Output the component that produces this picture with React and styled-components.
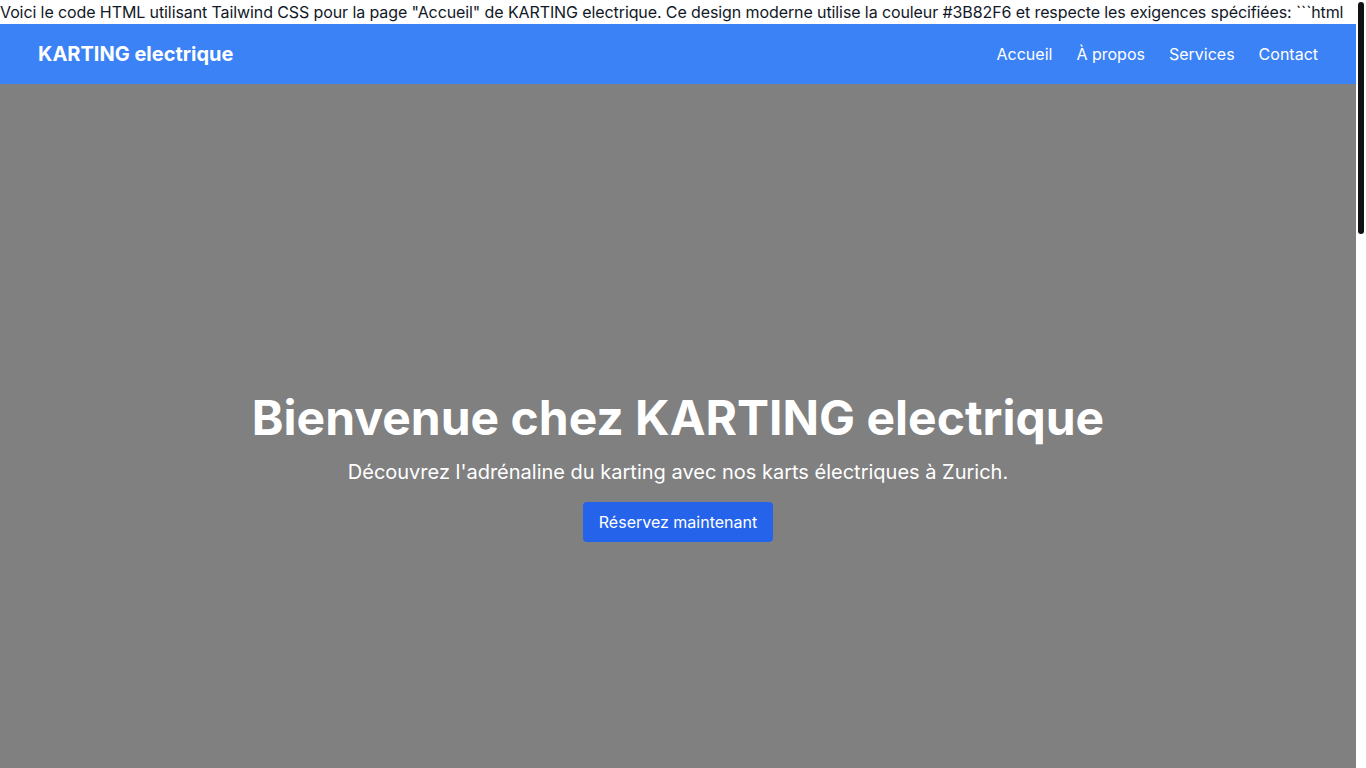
import React from "react";
import styled, { createGlobalStyle } from "styled-components";

const GlobalStyle = createGlobalStyle`
  *, *::before, *::after {
    box-sizing: border-box;
  }

  html, body {
    margin: 0;
    padding: 0;
  }

  body {
    font-family: Inter, "Noto Sans", "Liberation Sans", sans-serif;
    font-size: 16px;
    line-height: 24px;
    color: #111827;
    background: #ffffff;
  }
`;

// the page keeps a 10px gutter on the right, like the reference's scrollbar track
const Page = styled.div`
  margin-right: 10px;
`;

const ScrollThumb = styled.div`
  position: fixed;
  top: 2px;
  right: 2px;
  width: 6px;
  height: 232px;
  border-radius: 3px;
  background: #111111;
`;

const Intro = styled.p`
  margin: 0;
  white-space: nowrap;
  letter-spacing: -0.1px;
  overflow: hidden;
`;

const Header = styled.header`
  background-color: #3b82f6;
  color: #ffffff;
`;

const Container = styled.div`
  max-width: 1280px;
  margin: 0 auto;
  display: flex;
  align-items: center;
  justify-content: space-between;
  padding: 16px 0;
`;

const Logo = styled.a`
  font-size: 20px;
  line-height: 28px;
  font-weight: 700;
  color: #ffffff;
  text-decoration: none;
`;

const Nav = styled.nav`
  display: flex;
  gap: 24px;
`;

const NavLink = styled.a`
  color: #ffffff;
  text-decoration: none;
  font-size: 16px;
  line-height: 24px;

  &:hover {
    text-decoration: underline;
  }
`;

const Hero = styled.section`
  height: 100vh;
  background-color: #808080;
  display: flex;
  flex-direction: column;
  align-items: center;
  justify-content: center;
  text-align: center;
  color: #ffffff;
`;

const Title = styled.h1`
  margin: 0 0 16px;
  font-size: 48px;
  line-height: 48px;
  font-weight: 700;
`;

const Subtitle = styled.p`
  margin: 0 0 16px;
  font-size: 20px;
  line-height: 28px;
`;

const Button = styled.a`
  display: inline-block;
  background-color: #2563eb;
  color: #ffffff;
  padding: 8px 16px;
  border-radius: 4px;
  font-size: 16px;
  line-height: 24px;
  text-decoration: none;
  cursor: pointer;

  &:hover {
    background-color: #1d4ed8;
  }
`;

const Below = styled.main`
  min-height: 1650px;
  background: #ffffff;
`;

const App = () => {
  return (
    <>
      <GlobalStyle />
      <Page>
        <Intro>
          Voici le code HTML utilisant Tailwind CSS pour la page "Accueil" de KARTING electrique. Ce design moderne utilise la couleur #3B82F6 et respecte les exigences spécifiées: ```html
        </Intro>
        <Header>
          <Container>
            <Logo href="#">KARTING electrique</Logo>
            <Nav>
              <NavLink href="#">Accueil</NavLink>
              <NavLink href="#apropos">À propos</NavLink>
              <NavLink href="#services">Services</NavLink>
              <NavLink href="#contact">Contact</NavLink>
            </Nav>
          </Container>
        </Header>
        <Hero>
          <Title>Bienvenue chez KARTING electrique</Title>
          <Subtitle>Découvrez l'adrénaline du karting avec nos karts électriques à Zurich.</Subtitle>
          <Button href="#">Réservez maintenant</Button>
        </Hero>
        <Below />
      </Page>
      <ScrollThumb />
    </>
  );
};

export default App;
